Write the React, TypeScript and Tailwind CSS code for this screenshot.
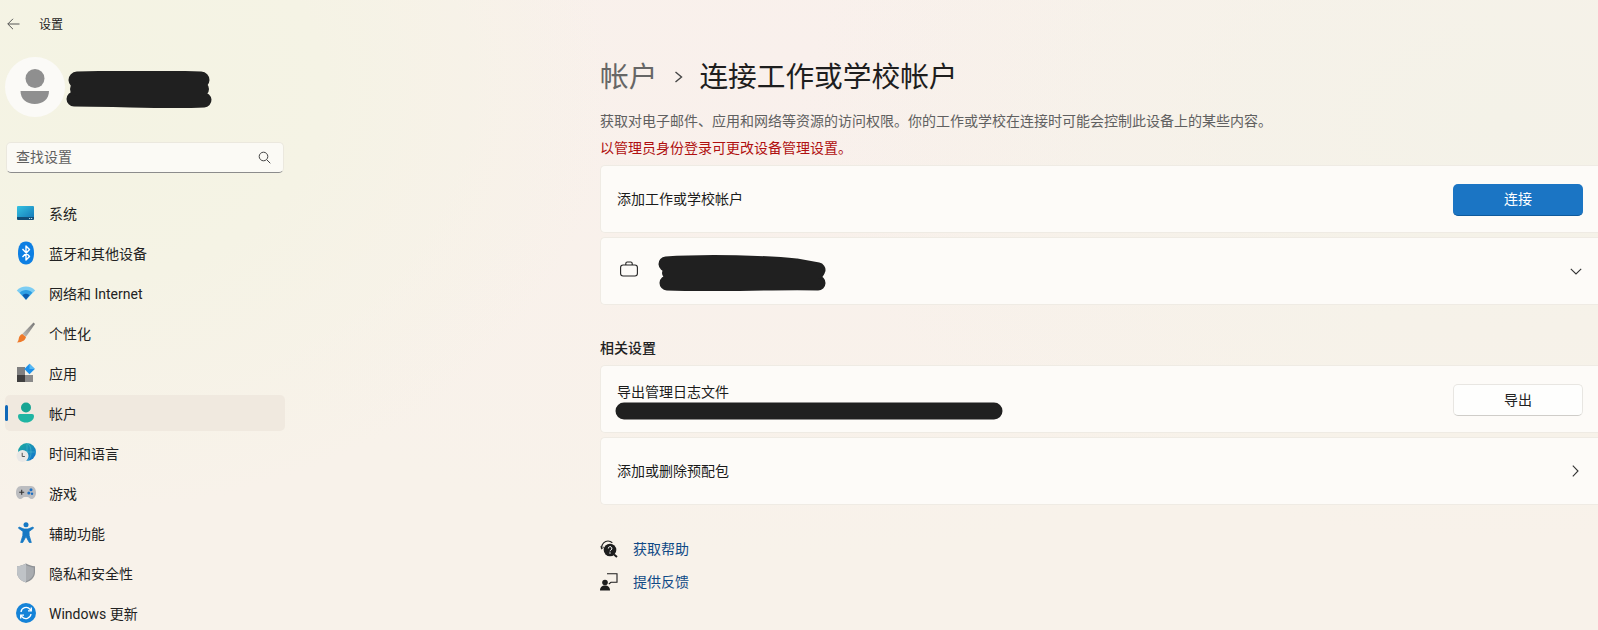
import React from "react";

const Blob = ({ w, h, lines }: { w: number; h: number; lines: [string, number][] }) => (
  <svg width={w} height={h} viewBox={`0 0 ${w} ${h}`} className="shrink-0 block">
    {lines.map(([d, sw], i) => (
      <path key={i} d={d} fill="none" stroke="#202020" strokeWidth={sw} strokeLinecap="round" strokeLinejoin="round" />
    ))}
  </svg>
);

const SystemIcon = () => (
  <svg width="20" height="20" viewBox="0 0 20 20">
    <defs>
      <linearGradient id="sysg" x1="0" y1="0" x2="1" y2="1">
        <stop offset="0" stopColor="#35c3e2" />
        <stop offset="1" stopColor="#1478b8" />
      </linearGradient>
    </defs>
    <path d="M1 4a1 1 0 0 1 1-1h15a1 1 0 0 1 1 1V15H1z" fill="url(#sysg)" />
    <path d="M1 14h17v2a1 1 0 0 1-1 1H2a1 1 0 0 1-1-1z" fill="#114d78" />
    <rect x="13" y="15" width="1.2" height="1" fill="#b6dcec" />
    <rect x="15" y="15" width="1.2" height="1" fill="#b6dcec" />
  </svg>
);

const BluetoothIcon = () => (
  <svg width="20" height="24" viewBox="0 0 20 24">
    <path d="M10 .5c5.500 0 8 4.500 8 11.500s-2.500 11.500-8 11.500S2 19 2 12 4.500.5 10 .5z" fill="#0d7fe3" />
    <path d="M6.500 8l7 7.500L10 19V5l3.500 3.500-7 7.500" fill="none" stroke="#fff" strokeWidth="1.400" strokeLinejoin="round" />
  </svg>
);

const WifiIcon = () => (
  <svg width="20" height="20" viewBox="0 0 20 20">
    <path d="M.8 7.500C3 5 6.500 3.500 10 3.500s7 1.500 9.200 4L10 16.800z" fill="#7ccdf3" />
    <path d="M3.700 9.800C5.300 8 7.500 7 10 7s4.700 1 6.300 2.800L10 16.800z" fill="#2c9fe4" />
    <path d="M6.500 12.300C7.500 11.300 8.700 10.800 10 10.800s2.500.5 3.500 1.500L10 16.800z" fill="#0a5cae" />
  </svg>
);

const BrushIcon = () => (
  <svg width="20" height="22" viewBox="0 0 20 22">
    <defs>
      <linearGradient id="brg" x1="1" y1="0" x2="0" y2="1">
        <stop offset="0" stopColor="#757575" />
        <stop offset="1" stopColor="#c0beb9" />
      </linearGradient>
    </defs>
    <path d="M17.500.5 19 2 10 14.800 6.300 12z" fill="url(#brg)" />
    <path d="M6.300 12 10 15c-.6 2.800-3 5.200-9 5.500 1.800-1.500 1.500-3.500 2-5 .4-1.500 1.600-3 3.300-3.500z" fill="#ee7a2b" />
  </svg>
);

const AppsIcon = () => (
  <svg width="20" height="20" viewBox="0 0 20 20">
    <rect x="1" y="4" width="8" height="8" fill="#7f7f80" />
    <rect x="1" y="12" width="8" height="7" fill="#3f3f3f" />
    <rect x="9" y="12" width="8" height="7" fill="#8a8a8a" />
    <path d="M13.500 .8 18.800 6l-5.300 5.300L8.300 6z" fill="#1c90ea" />
    <path d="M13.500.8 18.800 6h-5.300z" fill="#55b9f4" />
  </svg>
);

const AccountIcon = () => (
  <svg width="20" height="22" viewBox="0 0 20 22">
    <circle cx="10" cy="5.500" r="5" fill="#17a593" />
    <path d="M2 14a2 2 0 0 1 2-2h12a2 2 0 0 1 2 2c0 4-3.600 6.500-8 6.500S2 18 2 14z" fill="#1fb5a3" />
  </svg>
);

const TimeIcon = () => (
  <svg width="20" height="20" viewBox="0 0 20 20">
    <defs>
      <linearGradient id="tmg" x1="0" y1="0" x2="1" y2="1">
        <stop offset="0" stopColor="#1cae9e" />
        <stop offset="1" stopColor="#1470d0" />
      </linearGradient>
    </defs>
    <circle cx="11" cy="9" r="9" fill="url(#tmg)" />
    <path d="M11 0v18M2 9h18M11 0c3 2 4 5 4 9s-1 7-4 9" fill="none" stroke="#6bd0dc" strokeWidth=".5" opacity=".7" />
    <circle cx="6.500" cy="13" r="6" fill="#e9e8e6" />
    <path d="M6.200 9.800v3.700h2.700" fill="none" stroke="#555" strokeWidth="1" />
  </svg>
);

const GameIcon = () => (
  <svg width="20" height="20" viewBox="0 0 20 20">
    <path d="M5 3h10c3 0 5 2.800 5 6.700 0 3-1.700 6.300-4.500 6.300-1.800 0-2.500-2-4-2H8.500c-1.500 0-2.200 2-4 2C1.700 16 0 12.700 0 9.700 0 5.800 2 3 5 3z" fill="#bcbdc0" />
    <path d="M5.700 6.700v5M3.200 9.200h5" stroke="#333" strokeWidth="1.100" />
    <circle cx="15" cy="6.700" r="1.500" fill="#1d6fc2" />
    <circle cx="12.800" cy="9.900" r="1.500" fill="#1d6fc2" />
    <circle cx="16" cy="10.700" r="1.200" fill="#1d6fc2" />
  </svg>
);

const AccessIcon = () => (
  <svg width="20" height="22" viewBox="0 0 20 22">
    <circle cx="10" cy="2.800" r="2.500" fill="#1578c4" />
    <path d="M2.500 6.200 3 5 8 7h4l5-2 .5 1.200L13 9.500l.2 4 2.100 7h-2L10 14.500 6.700 20.500h-2l2.100-7 .2-4z" fill="#1578c4" stroke="#1578c4" strokeWidth=".8" strokeLinejoin="round" />
  </svg>
);

const ShieldIcon = () => (
  <svg width="20" height="20" viewBox="0 0 20 20">
    <path d="M10 .5c2.500 1.500 5.500 2.500 9 2.800v6c0 5-4 8.700-9 10.200-5-1.500-9-5.200-9-10.200v-6C4.500 3 7.500 2 10 .5z" fill="#8f9296" />
    <path d="M10 .5c-2.500 1.500-5.500 2.500-9 2.800v6c0 5 4 8.700 9 10.200z" fill="#bfc3c7" />
    <path d="M10 2c2.300 1.300 5 2.200 7.800 2.500v4.800c0 4.300-3.500 7.500-7.800 8.900z" fill="#a9acb0" />
  </svg>
);

const UpdateIcon = () => (
  <svg width="20" height="20" viewBox="0 0 20 20">
    <circle cx="10" cy="10" r="10" fill="#1583d8" />
    <path d="M5 9a5.200 5.200 0 0 1 9-2.800l1 1.300M15 11a5.200 5.200 0 0 1-9 2.800l-1-1.300" fill="none" stroke="#fff" strokeWidth="1.300" />
    <path d="M15.300 4.500v3.300H12M4.700 15.500v-3.300H8" fill="none" stroke="#fff" strokeWidth="1.300" />
  </svg>
);

const nav: { label: string; icon: React.ReactNode; active?: boolean }[] = [
  { label: "系统", icon: <SystemIcon /> },
  { label: "蓝牙和其他设备", icon: <BluetoothIcon /> },
  { label: "网络和 Internet", icon: <WifiIcon /> },
  { label: "个性化", icon: <BrushIcon /> },
  { label: "应用", icon: <AppsIcon /> },
  { label: "帐户", icon: <AccountIcon />, active: true },
  { label: "时间和语言", icon: <TimeIcon /> },
  { label: "游戏", icon: <GameIcon /> },
  { label: "辅助功能", icon: <AccessIcon /> },
  { label: "隐私和安全性", icon: <ShieldIcon /> },
  { label: "Windows 更新", icon: <UpdateIcon /> },
];

const Card = ({ children, className = "" }: { children: React.ReactNode; className?: string }) => (
  <div className={`h-[68px] flex items-center justify-between bg-[#fdfbf8] border border-r-0 border-[#efebe4] rounded-l-[5px] pl-4 pr-[15px] ${className}`}>
    {children}
  </div>
);

export default function App() {
  return (
    <div className="h-[630px] w-[1598px] overflow-hidden flex font-['Roboto','Noto_Sans_CJK_SC',sans-serif] text-[#1b1b1b] text-sm bg-[radial-gradient(ellipse_520px_420px_at_90px_90px,#f4f3e3_0%,#f5f3e5_45%,transparent_100%),radial-gradient(ellipse_700px_420px_at_1500px_120px,#f4f2e8_0%,transparent_100%),radial-gradient(ellipse_700px_500px_at_800px_60px,#f9f0ec_0%,transparent_100%),linear-gradient(#f8f2ea,#f8f2ea)]">
      <aside className="w-[290px] shrink-0 flex flex-col">
        <div className="h-12 shrink-0 flex items-center pl-[7px]">
          <svg width="13" height="12" viewBox="0 0 13 12" fill="none" stroke="#555" strokeWidth="1">
            <path d="M12.500 6H.8M6 .8.800 6 6 11.200" />
          </svg>
          <span className="ml-[19px] mt-[2px] text-xs">设置</span>
        </div>
        <div className="flex items-center pl-[5px] h-[60px] shrink-0 mt-[9px]">
          <div className="w-[60px] h-[60px] rounded-full bg-[#fbfaf7] flex items-center justify-center shrink-0">
            <svg width="30" height="36" viewBox="0 0 30 36">
              <circle cx="15" cy="9.500" r="9.500" fill="#8f8f8f" />
              <path d="M0.500 22h28.500c0 8-6 13-14.250 13S.5 30 .5 22z" fill="#8f8f8f" />
            </svg>
          </div>
          <div className="mt-[6px]">
            <Blob
              w={147}
              h={38}
              lines={[
                ["M12 9C50 8 110 8 136 9", 17],
                ["M9 28C60 28 100 31 139 29", 15],
                ["M12 18h125", 14],
              ]}
            />
          </div>
        </div>
        <div className="mt-[25px] ml-[6px] w-[278px] h-[31px] shrink-0 rounded-[5px] bg-[#fbfaf5] border border-[#ebe8de] border-b-[#8c8c8c] flex items-center justify-between pl-[9px] pr-[12px] text-[#5f5f5f]">
          <span className="-mt-[2px]">查找设置</span>
          <svg width="13" height="13" viewBox="0 0 13 13" fill="none" stroke="#444" strokeWidth="1">
            <circle cx="5.500" cy="5.500" r="4.300" />
            <path d="M8.700 8.700 12.300 12.300" />
          </svg>
        </div>
        <nav className="mt-[22px] flex flex-col gap-1 shrink-0">
          {nav.map((n) => (
            <div
              key={n.label}
              className={`h-9 ml-[5px] w-[280px] rounded-[5px] flex items-center shrink-0 ${n.active ? "bg-[#f0e9df]" : ""}`}
            >
              <div className={`w-[3px] h-4 rounded-sm shrink-0 ${n.active ? "bg-[#0f68b8]" : ""}`} />
              <div className="ml-[6px] w-[24px] flex justify-center shrink-0">{n.icon}</div>
              <span className="ml-[11px] mt-[2px] whitespace-nowrap text-[#222]">{n.label}</span>
            </div>
          ))}
        </nav>
      </aside>
      <main className="flex-1 min-w-0 ml-[310px] pt-[57px] flex flex-col">
        <div className="h-10 flex items-center text-[28.700px] leading-10">
          <span className="text-[#666]">帐户</span>
          <svg className="ml-[17px] mr-[16px]" width="9" height="12" viewBox="0 0 9 12" fill="none" stroke="#444" strokeWidth="1.400">
            <path d="M1.500 1 7.500 6 1.500 11" />
          </svg>
          <span className="text-[#1e1e1e]">连接工作或学校帐户</span>
        </div>
        <p className="mt-[14px] h-5 leading-5 text-[#606060]">获取对电子邮件、应用和网络等资源的访问权限。你的工作或学校在连接时可能会控制此设备上的某些内容。</p>
        <p className="mt-[7px] h-5 leading-5 text-[#b01010]">以管理员身份登录可更改设备管理设置。</p>
        <div className="mt-[7px] flex flex-col gap-1">
          <Card>
            <span>添加工作或学校帐户</span>
            <button className="mt-[1px] w-[130px] h-[32px] rounded-[5px] bg-[#1b75c4] border-b border-[#0f5a9c] text-white">连接</button>
          </Card>
          <Card>
            <div className="flex items-center">
              <svg className="ml-[3px] -mt-[4px]" width="18" height="18" viewBox="0 0 18 18" fill="none" stroke="#222" strokeWidth="1.100">
                <rect x=".6" y="5" width="16.800" height="11" rx="2.500" />
                <path d="M5.800 5V3.500a1.500 1.500 0 0 1 1.500-1.500h3.400a1.500 1.500 0 0 1 1.500 1.500V5" />
              </svg>
              <div className="ml-[20px] mt-[5px]">
                <Blob
                  w={168}
                  h={37}
                  lines={[
                    ["M8 9C50 6 110 8 138 11L160 15", 15],
                    ["M9 28C60 30 110 27 160 28", 15],
                    ["M10 18h150", 12],
                  ]}
                />
              </div>
            </div>
            <svg className="mr-[1px] mt-[1px]" width="12" height="7" viewBox="0 0 12 7" fill="none" stroke="#333" strokeWidth="1.100">
              <path d="M.8.8 6 6 11.200.8" />
            </svg>
          </Card>
        </div>
        <div className="mt-[33px] h-5 leading-5 font-medium text-[#222]">相关设置</div>
        <div className="mt-[7px] flex flex-col gap-1">
          <Card>
            <div className="flex flex-col -ml-[2px] pt-[4px]">
              <span className="ml-[2px] leading-[20px]">导出管理日志文件</span>
              <Blob w={388} h={18} lines={[["M9 9C100 10 300 8 379 9", 17]]} />
            </div>
            <button className="mt-[1px] w-[130px] h-[32px] rounded-[5px] bg-[#fefefd] border border-[#e8e6e2] border-b-[#cfcdc9] text-[#222]">导出</button>
          </Card>
          <Card>
            <span>添加或删除预配包</span>
            <svg className="mr-[4px]" width="7" height="12" viewBox="0 0 7 12" fill="none" stroke="#333" strokeWidth="1.100">
              <path d="M.8.6 6 6 .8 11.400" />
            </svg>
          </Card>
        </div>
        <div className="mt-[34px] flex flex-col gap-[13px]">
          <div className="h-5 flex items-center text-[#104a86]">
            <svg width="18" height="18" viewBox="0 0 18 18" className="shrink-0">
              <path d="M1.500 8C1.500 3.500 5 1 8 1c1.800 0 3.200.7 4.300 1.700" fill="none" stroke="#222" strokeWidth="1.200" />
              <path d="M1 6 1.500 9 3.800 7" fill="none" stroke="#222" strokeWidth="1" />
              <circle cx="10" cy="10" r="6.300" fill="#1d1d1d" />
              <path d="M14 14.500 17 17" stroke="#1d1d1d" strokeWidth="2" />
              <path d="M8.300 8.500a1.800 1.800 0 1 1 2.700 1.500c-.6.400-1 .7-1 1.300" fill="none" stroke="#fff" strokeWidth="1" />
              <circle cx="10" cy="13" r=".7" fill="#fff" />
            </svg>
            <span className="ml-[15px]">获取帮助</span>
          </div>
          <div className="h-5 flex items-center text-[#104a86]">
            <svg width="18" height="18" viewBox="0 0 18 18" className="shrink-0">
              <circle cx="5" cy="9.500" r="2.800" fill="#1d1d1d" />
              <path d="M0 17.500c0-3.500 2-5 5-5s5 1.500 5 5z" fill="#1d1d1d" />
              <path d="M7 .8h10v8.500H11L8.800 11" fill="none" stroke="#1d1d1d" strokeWidth="1.100" />
            </svg>
            <span className="ml-[15px]">提供反馈</span>
          </div>
        </div>
      </main>
    </div>
  );
}
